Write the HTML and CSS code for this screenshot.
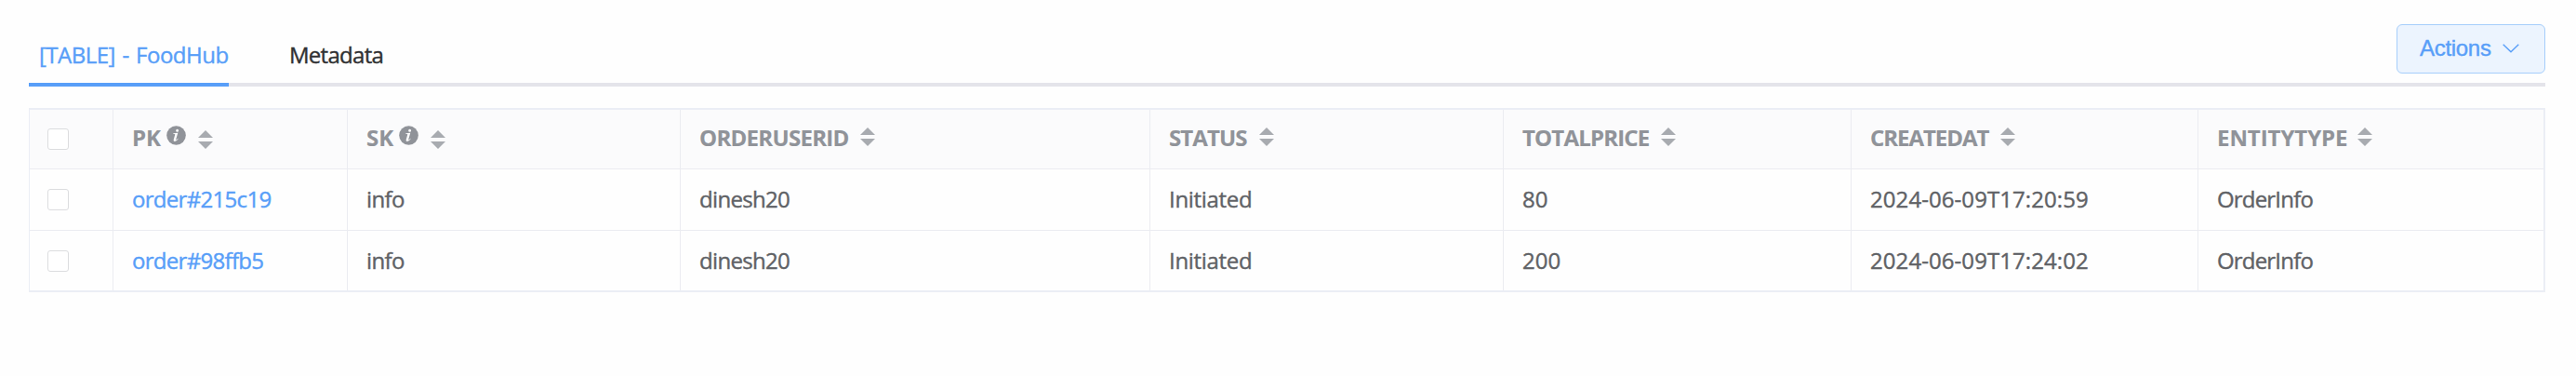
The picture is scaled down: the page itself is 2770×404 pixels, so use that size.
FILE: index.html
```
<!DOCTYPE html>
<html lang="en">
<head>
<meta charset="utf-8">
<title>FoodHub</title>
<link rel="stylesheet" href="styles.css">
</head>
<body>
<svg class="defs" width="0" height="0">
  <symbol id="sort" viewBox="0 0 16 20"><path d="M8 0 16 8H0zM0 12H16L8 20z"/></symbol>
  <symbol id="info" viewBox="0 0 21 21"><circle cx="10.5" cy="10.5" r="10.3"/><path class="mark" d="M11.6 3.8a1.5 1.5 0 1 1 0 3 1.5 1.5 0 0 1 0-3zM7.4 8.3 12.3 7.7 10.3 14.6Q10 15.6 10.7 15.2 11.4 14.7 12.1 13.7L12.7 14.1Q11 17 8.9 17 7.2 16.9 7.7 14.9L9.2 9.7Q9.4 8.9 8.5 8.9L7.3 8.9z"/></symbol>
</svg>
<header class="topbar">
  <nav class="tabs">
    <a class="tab tab-active">[TABLE] - FoodHub</a>
    <a class="tab">Metadata</a>
  </nav>
  <button class="actions">Actions<svg class="chevron" viewBox="0 0 18 10"><path d="M.7 .7 9 8.7 17.3 .7"/></svg></button>
</header>
<main class="grid">
  <div class="row head">
    <div class="cell check"><span class="box"></span></div>
    <div class="cell"><span class="label h-pk">PK</span><svg class="info"><use href="#info"/></svg><svg class="sort low"><use href="#sort"/></svg></div>
    <div class="cell"><span class="label h-sk">SK</span><svg class="info"><use href="#info"/></svg><svg class="sort low"><use href="#sort"/></svg></div>
    <div class="cell"><span class="label h-user">ORDERUSERID</span><svg class="sort"><use href="#sort"/></svg></div>
    <div class="cell"><span class="label h-status">STATUS</span><svg class="sort"><use href="#sort"/></svg></div>
    <div class="cell"><span class="label h-price">TOTALPRICE</span><svg class="sort"><use href="#sort"/></svg></div>
    <div class="cell"><span class="label h-created">CREATEDAT</span><svg class="sort"><use href="#sort"/></svg></div>
    <div class="cell"><span class="label h-type">ENTITYTYPE</span><svg class="sort"><use href="#sort"/></svg></div>
  </div>
  <div class="row">
    <div class="cell check"><span class="box"></span></div>
    <div class="cell link">order#215c19</div>
    <div class="cell c-sk">info</div>
    <div class="cell c-user">dinesh20</div>
    <div class="cell c-status">Initiated</div>
    <div class="cell c-num">80</div>
    <div class="cell c-num">2024-06-09T17:20:59</div>
    <div class="cell c-type">OrderInfo</div>
  </div>
  <div class="row last">
    <div class="cell check"><span class="box"></span></div>
    <div class="cell link">order#98ffb5</div>
    <div class="cell c-sk">info</div>
    <div class="cell c-user">dinesh20</div>
    <div class="cell c-status">Initiated</div>
    <div class="cell c-num">200</div>
    <div class="cell c-num">2024-06-09T17:24:02</div>
    <div class="cell c-type">OrderInfo</div>
  </div>
</main>
</body>
</html>
```
FILE: styles.css
```
* { box-sizing: border-box; }
body {
  margin: 0;
  padding: 0 33px 0 31px;
  background: #fefefe;
  font: 500 24px/36px "Open Sans", "Noto Sans", sans-serif;
  color: #606266;
  -webkit-text-stroke: .4px currentColor;
}
.defs { display: block; }
.topbar {
  display: flex;
  justify-content: space-between;
  align-items: flex-start;
  height: 93px;
  padding-top: 26px;
  border-bottom: 4px solid #e4e4ea;
}
.tabs { display: flex; gap: 65px; }
.tab { height: 67px; padding-top: 15px; color: #303133; letter-spacing: -.72px; }
.tab-active {
  width: 215px;
  padding-left: 11px;
  color: #589ef8;
  letter-spacing: -.5px;
  word-spacing: 1.7px;
  white-space: nowrap;
  border-bottom: 4px solid #589ef8;
}
.actions {
  display: flex;
  align-items: center;
  width: 160px;
  height: 53px;
  padding: 0 0 1px 24px;
  font: 24px "Liberation Sans", Arial, sans-serif;
  letter-spacing: -.3px;
  color: #589ef8;
  background: #ecf4fe;
  border: 1px solid #a6cefb;
  border-radius: 6px;
}
.chevron { width: 18px; height: 10px; margin-left: 12px; fill: none; stroke: #589ef8; stroke-width: 1.4; }
.grid {
  margin-top: 23px;
  border: 2px solid #ebeef5;
  border-left-width: 1px;
  height: 198px;
}
.row {
  display: grid;
  grid-template-columns: 90px 252px 358px 505px 380px 374px 373px 371px;
  height: 66px;
  border-bottom: 1px solid #ebecf1;
}
.head { height: 64px; background: #fbfbfc; color: #909399; font-weight: 700; -webkit-text-stroke-width: .15px; }
.last { height: 64px; border-bottom: 0; }
.cell {
  display: flex;
  align-items: center;
  padding: 0 0 1px 20px;
  border-right: 1px solid #ebecf1;
}
.cell:last-child { border-right: 0; }
.check { padding: 0 0 0 19px; }
.box { width: 23px; height: 23px; background: #fff; border: 1px solid #dcdddf; border-radius: 3px; }
.last .cell { padding-bottom: 0; }
.head .cell { padding-bottom: 3px; }
.head .check, .last .check { padding-bottom: 0; }
.last .box { margin-top: 1px; }
.head .box { margin-bottom: 1px; }
.link { color: #589ef8; letter-spacing: -.7px; }
.c-sk { letter-spacing: -.6px; }
.c-user { letter-spacing: -.68px; }
.c-status { letter-spacing: -.32px; }
.c-num { letter-spacing: .07px; }
.c-type { letter-spacing: -.82px; }
.label { flex: none; white-space: nowrap; }
.h-pk { width: 37px; }
.h-sk { width: 35px; }
.h-user { width: 173px; letter-spacing: -.7px; }
.h-status { width: 97px; letter-spacing: -.88px; }
.h-price { width: 149px; letter-spacing: -.82px; }
.h-created { width: 140px; letter-spacing: -1.05px; }
.h-type { width: 151px; letter-spacing: -.06px; }
.info { width: 21px; height: 21px; margin: 0 13px 6px 0; fill: #909399; }
.mark { fill: #fbfbfc; }
.sort { width: 16px; height: 20px; margin-bottom: 2px; fill: #a8abb0; }
.low { margin: 4px 0 0; }
```
